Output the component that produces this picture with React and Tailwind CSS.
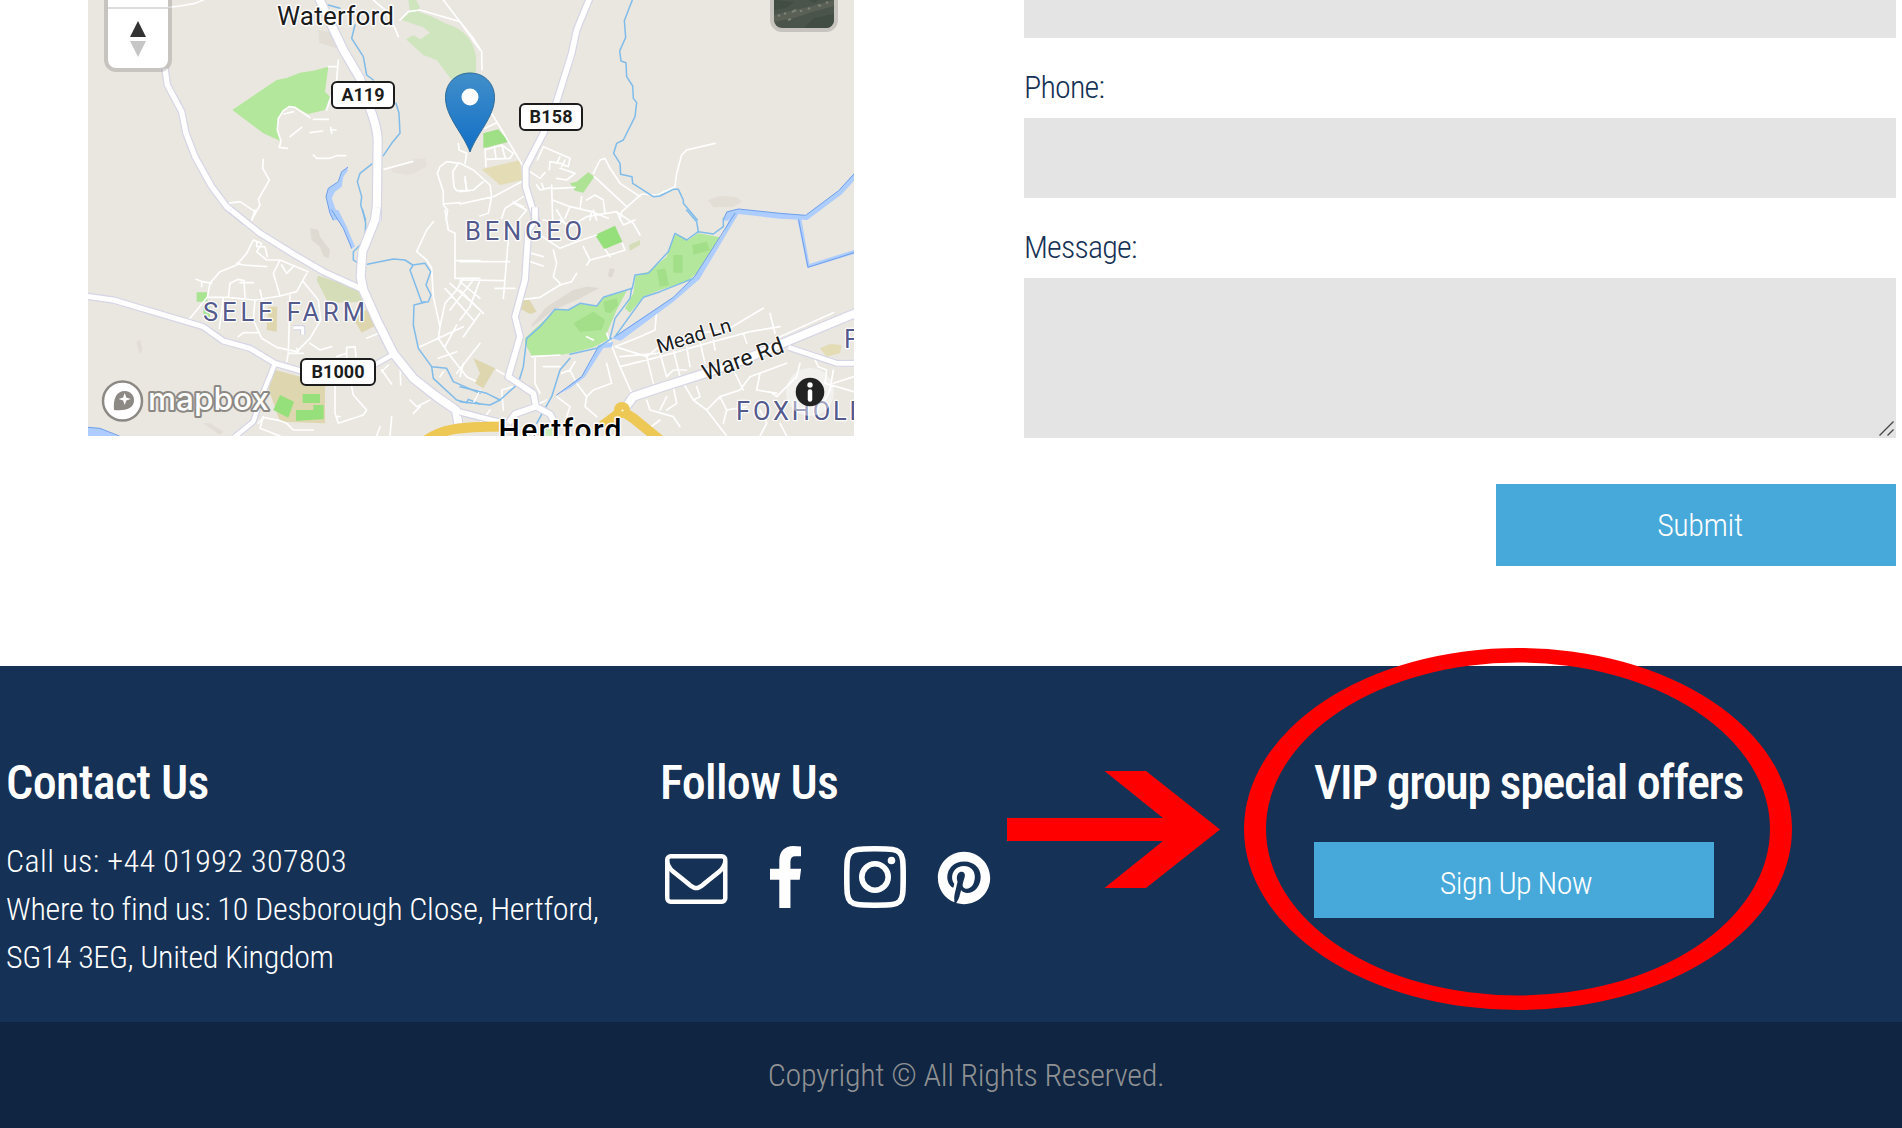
// src/App.jsx
import { FaPinterest } from "react-icons/fa";

// Map layers. Each sheet of the map is drawn at 3x in its own coordinates.
const SHEETS = [
  {
    id: "nw",
    at: "translate(80 0) scale(0.33333)",
    areas: [
      ["#cee5be", "M985 0H1008L1020 22 1012 34 1060 52 1100 72C1155 88 1182 125 1188 170V215L1150 235 1115 240 1070 180 1030 165 978 118 1000 106 1022 118 1050 98 1030 82 965 60 990 35Z"],
      ["#b3e79b", "M457 330L590 240 620 234 660 218 700 212 745 200 735 275 750 290 735 330 685 342 640 320 610 330 595 355 592 390 603 424 550 400Z"],
      ["#e2ddd5", "M715 90L750 95 770 145 718 128Z"],
      ["#e5e1da", "M930 500L1000 478 1035 475 1040 500 990 525 940 518Z"],
    ],
    water: [
      "M803 502L785 515 775 545 745 565 738 590 750 640 760 660H778L755 595 765 575 785 560 790 530 803 512Z",
    ],
    banks: ["M803 502L785 515 775 545 745 565 738 590 750 640 760 660"],
    streams: [
      "M745 15L780 25",
      "M825 75L815 115 850 170 860 225 880 240",
      "M948 310L957 340 960 400 935 430 910 467",
      "M878 490L840 520 832 545 845 590 842 615 857 660",
    ],
    lanes:
      "M265 22L300 18 345 10 370 0M775 180L770 240 750 300 740 330M745 200H772M603 424L598 442 622 445M603 424L592 390 595 355 610 332 628 320 645 322 690 353M612 342L640 335M700 358H745M630 410L665 382M690 398L728 393M752 382L755 400M752 390H768M700 465L710 475H750L770 467H797M550 478L548 505 568 540 535 598 540 615 515 660M440 610L480 605 525 635M912 508L998 484M960 60L985 35 1020 30 1140 65M880 0L915 30 945 85 955 110M1090 0L1140 65 1200 150M1135 430L1137 450 1160 460 1155 490M1100 485L1080 500 1072 520 1090 575V615L1103 630 1098 660M1100 485L1140 490M1135 490L1118 515 1122 560 1130 572 1170 572M1155 540L1160 570M1090 612L1140 608",
    roads: [
      ["M715 -10L745 55 790 150 840 235 870 325C885 365 893 390 893 420L890 665", 24],
      ["M255 205L262 255 305 335 318 400 345 470 395 560 440 620 495 665", 16],
    ],
  },
  {
    id: "ne",
    at: "translate(460 0) scale(0.33333)",
    areas: [
      ["#9fdf86", "M70 400L115 388 147 425 70 445Z"],
      ["#aee396", "M330 550L350 545 385 517 403 530 370 578 345 572Z"],
      ["#e3dcb5", "M65 508L180 480 187 540 120 555Z"],
      ["#e2ddd5", "M745 600L780 588 830 592 845 605 820 620 760 622Z"],
    ],
    water: [
      "M1182 520L1136 572 1037 646 960 640 835 627 800 636 790 662H803L812 650 835 642 960 656 1042 660 1146 582 1182 542Z",
    ],
    banks: ["M1182 522L1136 572 1037 646 960 640 835 627 800 636 790 660"],
    streams: [
      "M517 0L493 62 497 112 479 153 483 183 498 188 500 230 518 258 520 295 530 308 525 350 490 420 470 430 461 460 480 490 482 523 516 530 518 550 580 590 600 588 640 568H655L670 600V610L712 660",
    ],
    lanes:
      "M0 65L40 115 65 155 66 210M95 340L125 390 190 500M75 385L110 368M75 445L78 500M75 450L125 435 160 460 150 475 80 478M103 440L108 475M125 435L135 472M232 480L250 440 330 475 325 500 300 490 270 485 268 510M300 470L290 490M315 480L305 500M300 505L345 520 320 540 290 535M210 515L240 535 255 518M230 555L240 570 275 562M245 550L252 568M275 566L345 562M275 555L278 660M278 600L330 620 395 635 390 660M395 635L445 655M315 655L330 620M365 590L360 625M380 600L405 585 430 600 435 640M400 520L420 480 435 475 450 505 480 550 540 590M403 530L500 620M480 660L485 635 545 582 590 585 645 560 650 520 665 465 680 450 765 430M0 490L40 510 90 555 95 590 85 640 60 648M0 612L100 590 185 545M70 545L40 570 0 575M15 530L20 570M125 655L135 625 190 590M160 610L200 630 175 660M190 620L160 605",
    roads: [["M390 -8L350 90 335 160 290 305 250 400 197 502V560L230 668", 17]],
  },
  {
    id: "sw",
    at: "translate(80 210) scale(0.33333)",
    areas: [
      ["#ddd6ae", "M585 480L735 520V640L600 635 560 520Z"],
      ["#96e07c", "M600 555L642 575 625 623 580 600Z"],
      ["#96e07c", "M668 552H720V579H668ZM648 600H700V585H731V627L648 633Z"],
      ["#d5ddb8", "M715 197L830 235 850 275 760 278 740 270 710 210Z"],
      ["#ddd6ae", "M825 310L860 300 890 345 845 368 828 340Z"],
      ["#ddd6ae", "M565 290H592L590 365 560 360Z"],
      ["#a9e493", "M350 247H382V275H350ZM370 290H390V320H370Z"],
      ["#ded9d1", "M690 55L715 60 720 80 750 120 745 145 730 138 720 110 695 90Z"],
      ["#e2ddd5", "M170 395L180 390 187 420 178 432ZM370 640L390 640 430 665 420 675Z"],
    ],
    water: [
      "M24 652L60 655 118 680H24Z",
      "M755 0L790 55 815 115 825 110 800 50 775 0Z",
    ],
    banks: ["M755 0L790 55 815 115", "M24 652L60 655 118 678"],
    streams: [
      "M848 0L857 40 855 90 820 125V150L835 160",
      "M862 163L940 147 975 150 998 165 1035 160 1052 185 1038 225 1053 255 1045 275 1025 277 990 180 1000 165",
      "M1035 277L1002 285 1000 345 1015 415 1055 470 1100 475 1120 515 1200 550",
      "M1055 470L1060 505 1130 570 1160 578 1165 568 1200 582",
    ],
    lanes:
      "M525 0L515 30M520 90L500 130 470 165 420 185 390 220 382 262 330 325M348 208L368 215 395 220M365 230V215M382 262H440L525 270 600 258 650 245 680 190M445 262L450 220 475 208 492 212 495 265M480 218H520M430 262L418 355M540 240L552 290M520 90L545 100 530 125 560 150 600 150 685 185M530 95V110H555L562 140M600 150L580 190 600 258M605 165L620 190 640 170M470 160L490 165 560 170M670 215L715 270 722 330 690 385 650 425 590 412 545 385 520 330 525 270M630 250L625 430 620 455M625 430H670M650 415L655 425M690 400L720 420 755 410M475 380L490 368H535M765 530V610L775 640 850 615 860 600 820 555 815 530M770 620H780M860 385L900 368M800 445V412L825 410 828 440M770 440L800 430M905 480L935 522M925 465L905 485M960 450L962 525M535 640L550 622 600 632 620 640 640 660 700 660M550 620L540 655 600 678M1060 35L1040 60 1010 125 1040 150 1055 175 1060 260 1080 350 1075 385 1105 430 1160 500 1200 520M1095 0L1105 60 1125 70V205H1200M1125 152H1200M1150 205L1130 240M1180 210L1110 300M1110 220L1200 300M1095 235L1180 330M1200 310L1150 380M1080 350L1095 280 1130 240M1130 345L1095 410M1020 410L1075 385 1150 350M1075 445L1130 425M990 570L1010 590 1050 570M1000 610L1020 590M930 678L935 620M890 678L900 650M1090 485L1080 500M1130 490L1200 400",
    roads: [
      ["M453 0L540 70 640 132 730 185 845 237", 16],
      ["M15 258L100 270 370 350 430 393 510 415 585 460 660 482 700 484", 15],
      ["M870 472L945 430", 13],
      ["M585 460L545 560 520 635 460 684", 13],
      ["M890 -8L885 30 847 125 842 200 850 240 895 340 940 430 1000 505 1070 560 1128 600 1135 640", 24],
      ["M1128 603L1200 622", 16],
      ["M640 353H668V374", 9],
    ],
  },
  {
    id: "se",
    at: "translate(460 210) scale(0.33333)",
    areas: [
      ["#ded9d1", "M215 345L260 290 340 240 380 230 418 234 350 270 280 300 215 352Z"],
      ["#ded9d1", "M450 175L465 178 455 203 443 198Z"],
      ["#b3e79b", "M195 385L280 305 285 298 325 300 360 280 410 288 430 262 500 243 470 300 440 370 450 385 400 412 330 430 300 435 215 437 195 400Z"],
      ["#b3e79b", "M645 70L685 90 715 70 780 82 710 190 680 215 600 240 550 260 510 308 495 295 520 250 527 195 565 185 620 140Z"],
      ["#a3de89", "M340 340L400 305 435 330 425 360 360 365ZM430 275L470 265 475 285 450 310 435 305ZM640 135H668V188H640ZM590 180L615 175 627 225 600 230ZM697 105L740 95 750 120 700 135Z"],
      ["#96e07c", "M405 75L465 47 487 95 433 118Z"],
      ["#ddd6ae", "M180 275L205 265 230 305 210 312 178 295Z"],
      ["#ddd6ae", "M40 445L105 475 70 535 45 520 60 490Z"],
      ["#e3dcb5", "M1080 415L1110 402 1145 405 1140 430 1100 440Z"],
      ["#d5ddb8", "M507 105L540 90V105L510 122Z"],
    ],
    water: [
      "M835 12L718 208 640 275 482 392 455 385 465 378 640 262 705 198 790 70 815 10Z",
      "M1012 26L1024 26 1048 162 1182 120V132L1042 174Z",
      "M415 405L460 395 455 412 430 414 375 500 330 535 290 555 365 498 400 440Z",
    ],
    banks: [
      "M465 380L640 262 705 198 825 10",
      "M1016 30L1044 172 1182 128",
      "M290 555L365 500 415 410",
    ],
    streams: [
      "M790 25L790 50 760 72 715 65 680 90 645 70 625 125 565 190 525 195 517 235 430 262 410 288 360 280 325 300 285 298 240 350 200 385 190 470 175 520 120 570 80 550 0 530",
      "M680 0L710 35 715 65",
      "M515 235L510 265 465 325 450 385",
      "M465 380L550 262 600 245 700 205",
      "M455 385L410 415 330 433",
      "M330 445L300 480 275 560 230 640",
      "M0 575L90 585 120 570",
    ],
    lanes:
      "M145 90L130 265M0 155H148M0 210L135 212M60 210L30 290 0 330M0 240L70 310M0 215L60 265M105 235H165M215 130L250 140M210 155L250 168M240 75L300 115 350 95 410 75M280 120L290 160 280 200 300 220M350 190L335 215 300 225 240 262 190 268M300 30L330 50 380 20 470 5 520 40 540 75M250 30L300 40M370 110L390 150 380 165M435 118L450 140M487 100L495 120 465 130 390 150M470 5L490 45 525 30M290 0L320 50M400 0L410 30M225 445V520L240 550M215 440L300 435M345 455L330 480 350 520 380 560 375 590 410 620M330 480L305 490M440 460L455 520 400 540 380 560M440 370L480 470 520 560M465 410L560 440 610 400 700 370 800 360 910 295M590 300L585 360 540 380 465 410M480 440L590 430 680 400M480 470L600 440 740 400 870 365 960 350M930 310L945 370M600 430L620 500M560 440L580 520M640 420L660 500M680 410L690 470M720 395L735 460M760 390L765 420M850 370L860 400M680 480L640 480 620 500M670 520L700 570 720 560 710 530M700 570L740 600 800 678M740 600L780 560 840 540 870 500 980 460M820 480L850 540M780 560L800 600 860 590M900 490L890 540 950 550M1020 460L1010 500 950 560 930 545M1060 440L1075 470 1100 480 1095 520 1182 545M1120 480L1110 540 1090 580M1182 500L1120 520M900 600L920 640 900 678M560 570L570 600 640 620 660 650M600 600L620 560M560 660L600 630M640 530L650 580 620 600M960 640L980 678M800 600L790 640M130 600L125 540 160 530M60 640L90 600M200 600L260 570M290 560L330 590 320 620M250 470L300 470M10 460L0 500M60 540L40 580M110 480L145 500M380 380L400 390M960 380L1120 308",
    roads: [
      ["M225 -8V30L205 60 195 210 165 320 180 380 145 500 220 550 228 590", 17],
      ["M285 640L270 612 228 590 165 612 145 640", 17],
      ["M0 606L125 638", 15],
      ["M500 588L520 560 610 530 720 495 850 450 980 395 1190 308", 24],
      ["M985 412L1130 460H1190", 14],
    ],
  },
];

const SHIELDS = [
  { text: "A119", x: 332, y: 82, w: 62, len: 43 },
  { text: "B158", x: 520, y: 104, w: 62, len: 43 },
  { text: "B1000", x: 301, y: 359, w: 74, len: 53 },
];

const SUBURBS = [
  { text: "BENGEO", x: 465, y: 240, len: 117 },
  { text: "SELE FARM", x: 203, y: 320.5, len: 162 },
  { text: "FOXHOLE", x: 736, y: 420, len: 128 },
  { text: "F", x: 844, y: 348, len: 13 },
];

function Sheet({ sheet }) {
  return (
    <g transform={sheet.at} fill="none" strokeLinejoin="round" strokeLinecap="round">
      {sheet.areas.map(([fill, d]) => (
        <path key={d} d={d} fill={fill} />
      ))}
      <path d={sheet.lanes} stroke="#ffffff" strokeWidth="5" />
      {sheet.water.map((d) => (
        <path key={d} d={d} fill="#adccff" />
      ))}
      {sheet.banks.map((d) => (
        <path key={d} d={d} stroke="#6d9fea" strokeWidth="3" />
      ))}
      {sheet.streams.map((d) => (
        <path key={d} d={d} stroke="#7fbcea" strokeWidth="4.5" />
      ))}
    </g>
  );
}

function Roads({ sheet }) {
  return (
    <g transform={sheet.at} fill="none" strokeLinejoin="round">
      {sheet.roads.map(([d, w]) => (
        <path key={d} d={d} stroke="#d5d5e6" strokeWidth={w + 7} />
      ))}
      {sheet.roads.map(([d, w]) => (
        <path key={d} d={d} stroke="#ffffff" strokeWidth={w} />
      ))}
    </g>
  );
}

function MapDrawing() {
  return (
    <svg className="block" width="766" height="436" viewBox="88 0 766 436">
      <defs>
        <linearGradient id="pin" x1="0" y1="0" x2="0" y2="1">
          <stop offset="0" stopColor="#418fca" />
          <stop offset="1" stopColor="#126fc6" />
        </linearGradient>
      </defs>
      <rect x="88" width="766" height="436" fill="#eae6e0" />

      {SHEETS.map((s) => (
        <Sheet key={s.id} sheet={s} />
      ))}
      {SHEETS.map((s) => (
        <Roads key={s.id} sheet={s} />
      ))}

      {/* primary road round the town centre */}
      <g fill="none" stroke="#edc854" strokeWidth="10">
        <path d="M425 441C440 430 455 426.500 505 426.500" />
        <path d="M602 426L622 411L633 418L660 440" strokeLinejoin="round" />
      </g>
      <circle cx="622" cy="410" r="8" fill="#edc854" />
      <circle cx="622.500" cy="410.500" r="1" fill="#ffffff" />
      <rect x="545" y="428" width="8" height="8" fill="#cdeec0" />

      <g fontFamily="Roboto, sans-serif" fill="#1c1c1c" stroke="#ffffff" strokeLinejoin="round" paintOrder="stroke">
        <text x="277" y="24.500" fontSize="26" strokeWidth="3" textLength="117">
          Waterford
        </text>
        <text x="498.500" y="439.500" fontSize="30" fontWeight="500" fill="#000000" strokeWidth="3" textLength="123">
          Hertford
        </text>
        <g strokeWidth="2">
          <text fontSize="20" textLength="77" transform="translate(659 353.500) rotate(-17)">
            Mead Ln
          </text>
          <text fontSize="23" textLength="85" transform="translate(705.500 381) rotate(-20)">
            Ware Rd
          </text>
        </g>
        {SUBURBS.map((s) => (
          <text key={s.text} x={s.x} y={s.y} fontSize="25.500" fill="#545a8c" strokeWidth="2.500" textLength={s.len}>
            {s.text}
          </text>
        ))}
      </g>

      {SHIELDS.map((s) => (
        <g key={s.text}>
          <rect x={s.x} y={s.y} width={s.w} height="26" rx="5" fill="#ffffff" stroke="#1c1c1c" strokeWidth="2" />
          <text
            x={s.x + (s.w - s.len) / 2}
            y={s.y + 19.3}
            fontFamily="Roboto, sans-serif"
            fontSize="18"
            fontWeight="700"
            fill="#1c1c1c"
            textLength={s.len}
          >
            {s.text}
          </text>
        </g>
      ))}

      {/* marker */}
      <path
        d="M470 152C463 133 445.500 117 445.500 97.500C445.500 83 456 73 470 73C484 73 494.500 83 494.500 97.500C494.500 117 477 133 470 152Z"
        fill="url(#pin)"
        stroke="#2e6c97"
        strokeWidth="1"
      />
      <circle cx="470" cy="97" r="8.500" fill="#ffffff" />

      {/* provider logo */}
      <circle cx="122.500" cy="401" r="19.500" fill="#ffffff" stroke="#8c8985" strokeWidth="2.500" />
      <path d="M114 410C113 399 116 391 125 391C130 391 134 395 134 400C134 409 125 411 114 410Z" fill="#8c8985" />
      <path d="M124.700 393L126.300 397.400L130.700 399L126.300 400.600L124.700 405L123.100 400.600L118.700 399L123.100 397.400Z" fill="#ffffff" />
      <text
        x="148"
        y="409.500"
        fontFamily="Inter, sans-serif"
        fontSize="31"
        fontWeight="500"
        fill="#ffffff"
        stroke="#8c8985"
        strokeWidth="4"
        strokeLinejoin="round"
        paintOrder="stroke"
        textLength="121"
        lengthAdjust="spacingAndGlyphs"
      >
        mapbox
      </text>

      {/* attribution toggle */}
      <circle cx="810" cy="392" r="24" fill="#ffffff" fillOpacity="0.45" />
      <circle cx="810" cy="392" r="14.300" fill="#222222" />
      <circle cx="810" cy="385" r="2.700" fill="#ffffff" />
      <path d="M810 391.500V399.500" stroke="#ffffff" strokeWidth="4.500" strokeLinecap="round" />
    </svg>
  );
}

function ContactMap() {
  return (
    <div className="relative h-[436px] w-[766px] shrink-0 overflow-hidden">
      <MapDrawing />

      {/* zoom / compass control, runs off the top edge */}
      <div className="absolute -top-10 left-4 h-28 w-[68px] rounded-[12px] border-4 border-black/15 bg-white bg-clip-padding">
        <div className="h-[45px] border-b-2 border-[#dddddd]" />
        <svg className="mx-auto mt-3" width="16" height="36" viewBox="0 0 16 36">
          <path d="M8 0L16 16H0Z" fill="#333333" />
          <path d="M8 36L16 20H0Z" fill="#c6c6c6" />
        </svg>
      </div>

      {/* satellite toggle */}
      <div className="absolute -top-9 right-4 h-[68px] w-[68px] overflow-hidden rounded-[12px] border-4 border-black/15 bg-clip-padding">
        <svg width="60" height="60" viewBox="0 0 60 60">
          <rect width="60" height="60" fill="#4b544a" />
          <path d="M0 47L16 43L34 39L60 32V38L38 44L20 50L0 54Z" fill="#5a6056" />
          <path d="M0 32L20 34L12 40L0 42ZM40 50L60 46V60H30ZM30 30H48L40 35Z" fill="#414c42" />
          <path d="M4 48L6 47M10 46L12 45M18 44L22 42M26 43L28 43M34 40L36 41M44 37L47 38M14 52L17 51M52 34L54 35" stroke="#7d8077" strokeWidth="2" />
        </svg>
      </div>
    </div>
  );
}

function ContactForm() {
  return (
    <form className="flex w-[872px] flex-col text-[32px] leading-[48px] font-light text-[#153155]">
      <input type="email" className="h-[38px] w-full bg-[#e4e4e4]" />
      <label htmlFor="phone" className="h-20 pt-[25px] font-[350] tracking-[-0.8px]">
        Phone:
      </label>
      <input id="phone" type="tel" className="h-20 w-full bg-[#e4e4e4]" />
      <label htmlFor="message" className="h-20 pt-[25px] font-[350] tracking-[-0.8px]">
        Message:
      </label>
      <div className="relative h-40">
        <textarea id="message" className="block size-full resize-none bg-[#e4e4e4]" />
        {/* resize grip */}
        <svg className="absolute right-0.5 bottom-0.5" width="15" height="15" viewBox="0 0 15 15" stroke="#444444" strokeWidth="1.300">
          <path d="M0.500 14.500L14.500 0.500M8.500 14.500L14.500 8.500" />
        </svg>
      </div>
      <button type="button" className="mt-[46px] h-[82px] w-[400px] self-end bg-[#47a9da] pl-2 tracking-[-0.4px] text-white">
        Submit
      </button>
    </form>
  );
}

function SocialIcons() {
  return (
    <div className="mt-[35px] flex h-[62px] items-center pl-[5px] text-white">
      <svg className="mt-1 mr-[42px]" width="62.500" height="50" viewBox="0 256 1792 1408" preserveAspectRatio="none" fill="currentColor">
        <path d="M1664 1504V736q-32 36-69 66-268 206-426 338-51 43-83 67t-86.500 48.500T897 1280h-2q-48 0-102.500-24.500T706 1207t-83-67q-158-132-426-338-37-30-69-66v768q0 13 9.500 22.500t22.500 9.500h1472q13 0 22.500-9.500t9.500-22.500zm0-1051v-24.500l-.5-13-3-12.500-5.500-9-9-7.500-14-2.500H160q-13 0-22.500 9.500T128 416q0 168 147 284 193 152 401 317 6 5 35 29.500t46 37.500 44.500 31.500T852 1143t43 9h2q20 0 43-9t50.500-27.500T1035 1084t46-37.500 35-29.500q208-165 401-317 54-43 100.500-115.500T1664 453zm128-37v1088q0 66-47 113t-113 47H160q-66 0-113-47T0 1504V416q0-66 47-113t113-47h1472q66 0 113 47t47 113z" />
      </svg>
      <svg className="mr-[43px]" width="31.500" height="62" viewBox="479 0 864 1664" preserveAspectRatio="none" fill="currentColor">
        <path d="M1343 12v264h-157q-86 0-116 36t-30 108v189h293l-39 296h-254v759H734V905H479V609h255V391q0-186 104-288.500T1115 0q147 0 228 12z" />
      </svg>
      <svg className="mr-[31px]" width="62" height="62" viewBox="0 0 62 62" fill="none" stroke="currentColor" strokeWidth="5.600">
        <path d="M31 2.800C49 2.800 52 3.200 55.500 6.500C58.800 10 59.200 14 59.200 31C59.200 48 58.800 52 55.500 55.500C52 58.800 48 59.200 31 59.200C14 59.200 10 58.800 6.500 55.500C3.200 52 2.800 48 2.800 31C2.800 14 3.200 10 6.500 6.500C10 3.200 14 2.800 31 2.800Z" />
        <circle cx="31" cy="31" r="13.200" />
        <circle cx="47.500" cy="14.500" r="3.800" fill="currentColor" stroke="none" />
      </svg>
      <FaPinterest className="mt-px size-[54px]" />
    </div>
  );
}

function Footer() {
  return (
    <footer className="relative h-[462px] bg-[#153155] text-white">
      <div className="grid h-[356px] grid-cols-[654px_654px_1fr] pt-[89px] pl-1.5">
        <section>
          <h2 className="text-[48px] leading-[56px] font-medium tracking-[-0.6px]">Contact Us</h2>
          <div className="mt-[26px] text-[32px] leading-[48px] font-light whitespace-nowrap">
            <p className="tracking-[0.45px]">Call us: +44 01992 307803</p>
            <p className="tracking-[-0.25px]">Where to find us: 10 Desborough Close, Hertford,</p>
            <p className="tracking-[-0.35px]">SG14 3EG, United Kingdom</p>
          </div>
        </section>

        <section>
          <h2 className="text-[48px] leading-[56px] font-medium tracking-[-0.7px]">Follow Us</h2>
          <SocialIcons />
        </section>

        <section>
          <h2 className="text-[48px] leading-[56px] font-medium tracking-[-1.3px] whitespace-nowrap">
            VIP group special offers
          </h2>
          <button type="button" className="mt-[31px] h-[76px] w-[400px] bg-[#47a9da] pt-1.5 pl-1 text-[32px] leading-[48px] font-light tracking-[-0.6px]">
            Sign Up Now
          </button>
        </section>
      </div>

      <div className="flex h-[106px] items-center justify-center bg-[#102541] pl-[30px] text-[32px] leading-[48px] font-light tracking-[-0.3px] text-[#8f9193]">
        Copyright © All Rights Reserved.
      </div>

      {/* arrow and ring drawn over the footer */}
      <svg className="pointer-events-none absolute top-[-19px] left-[1007px]" width="787" height="364" viewBox="1007 647 787 364" fill="#ff0000">
        <path d="M1007 818H1163L1104.500 771H1146L1220 829.500L1146 888H1104.500L1163 841H1007Z" />
        <path
          fillRule="evenodd"
          d="M1244 829A274 181 0 0 1 1792 829A274 181 0 0 1 1244 829ZM1266 829A252 166.500 0 0 0 1770 829A252 166.500 0 0 0 1266 829Z"
        />
      </svg>
    </footer>
  );
}

export default function App() {
  return (
    <div className="h-[1128px] w-[1902px] overflow-hidden bg-white font-['Roboto_Condensed',Roboto,sans-serif]">
      <main className="flex h-[666px] gap-[170px] pl-[88px]">
        <ContactMap />
        <ContactForm />
      </main>
      <Footer />
    </div>
  );
}
